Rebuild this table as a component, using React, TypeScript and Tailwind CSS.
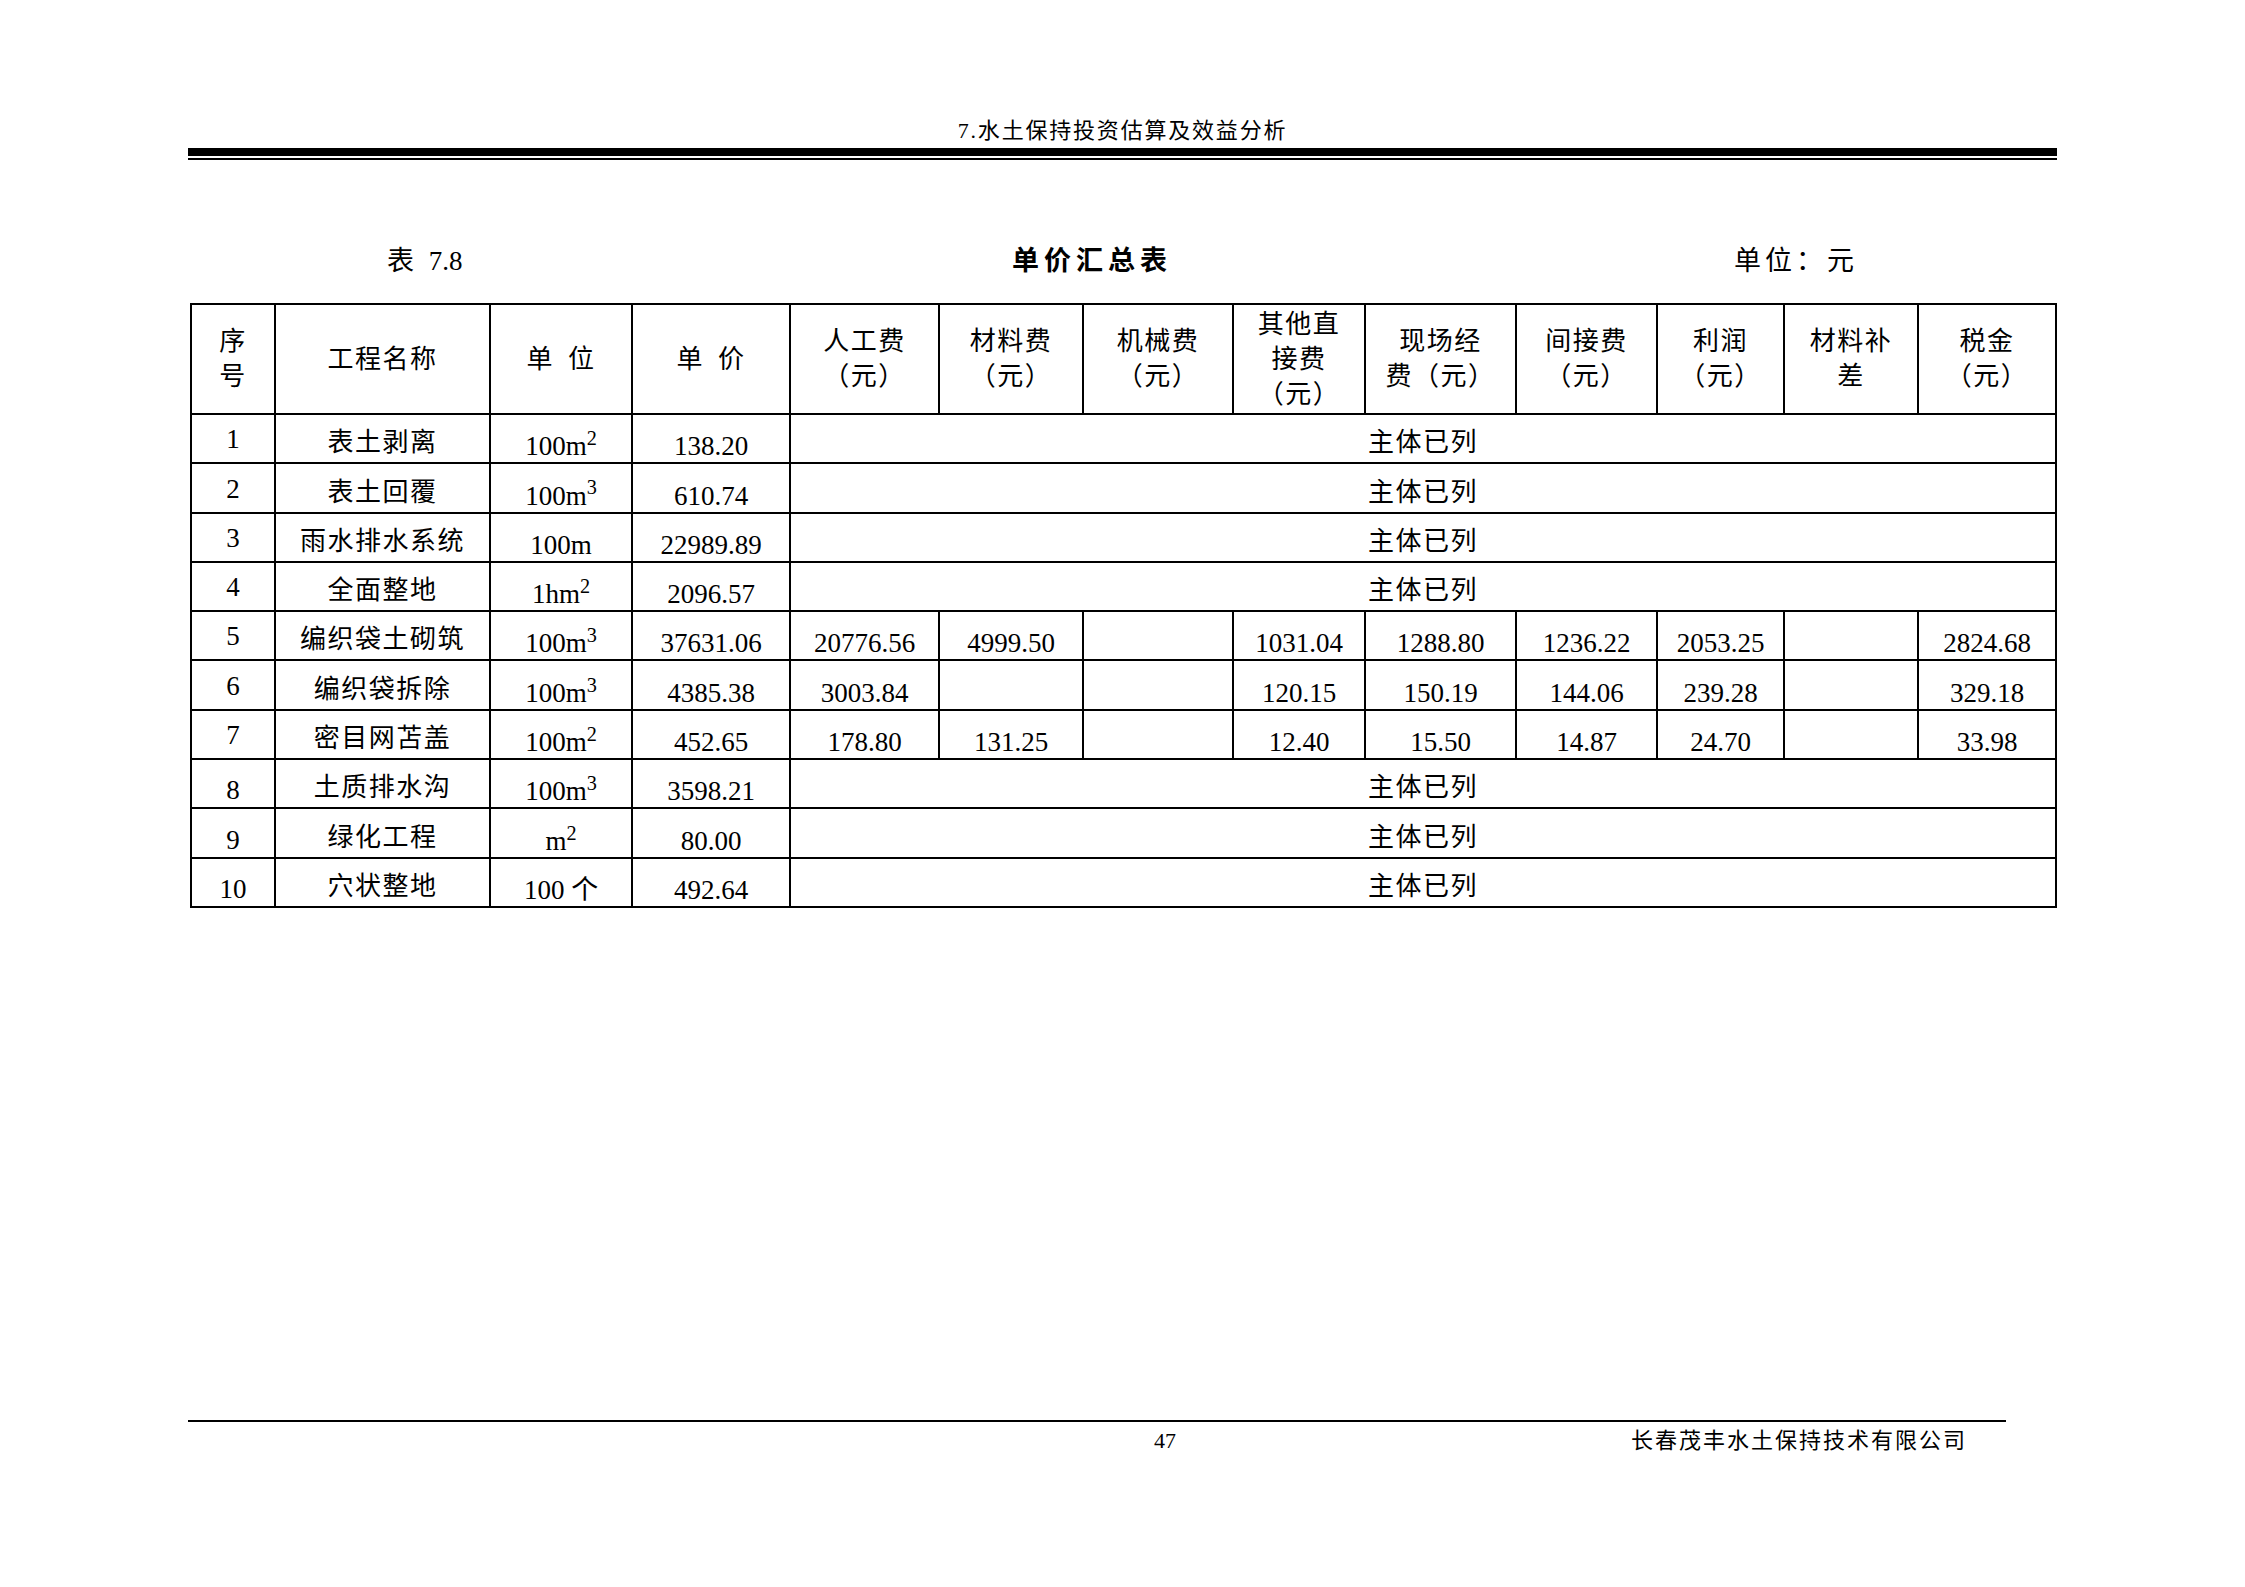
import React from "react";

const serif = "font-['Liberation_Serif','Noto_Sans_CJK_SC',serif]";

type Row = {
  no: string;
  name: string;
  unit: React.ReactNode;
  price: string;
  detail?: string[];
};

const rows: Row[] = [
  { no: "1", name: "表土剥离", unit: <>100m<sup>2</sup></>, price: "138.20" },
  { no: "2", name: "表土回覆", unit: <>100m<sup>3</sup></>, price: "610.74" },
  { no: "3", name: "雨水排水系统", unit: "100m", price: "22989.89" },
  { no: "4", name: "全面整地", unit: <>1hm<sup>2</sup></>, price: "2096.57" },
  {
    no: "5",
    name: "编织袋土砌筑",
    unit: <>100m<sup>3</sup></>,
    price: "37631.06",
    detail: ["20776.56", "4999.50", "", "1031.04", "1288.80", "1236.22", "2053.25", "", "2824.68"],
  },
  {
    no: "6",
    name: "编织袋拆除",
    unit: <>100m<sup>3</sup></>,
    price: "4385.38",
    detail: ["3003.84", "", "", "120.15", "150.19", "144.06", "239.28", "", "329.18"],
  },
  {
    no: "7",
    name: "密目网苫盖",
    unit: <>100m<sup>2</sup></>,
    price: "452.65",
    detail: ["178.80", "131.25", "", "12.40", "15.50", "14.87", "24.70", "", "33.98"],
  },
  { no: "8", name: "土质排水沟", unit: <>100m<sup>3</sup></>, price: "3598.21" },
  { no: "9", name: "绿化工程", unit: <>m<sup>2</sup></>, price: "80.00" },
  { no: "10", name: "穴状整地", unit: "100 个", price: "492.64" },
];

const colWidths = [84, 215, 142, 158, 149, 144, 150, 132, 151, 141, 127, 134, 138];

const th = "border-2 border-black align-middle text-center text-[26px] leading-[35px] tracking-[1.5px] font-normal";
const num = "border-2 border-black align-bottom text-center text-[27px] leading-[31px] p-0";
const cjk = "border-2 border-black align-bottom text-center text-[26px] leading-[31px] tracking-[1.5px] p-0 pb-[4px]";

export default function App() {
  return (
    <div className={`w-[2245px] h-[1587px] bg-white text-black flex flex-col ${serif}`}>
      {/* Running header */}
      <div className="ml-[188px] w-[1869px] pt-[118px]">
        <div className="text-center text-[22px] leading-[26px] tracking-[1.8px]">7.水土保持投资估算及效益分析</div>
        <div className="h-[8px] bg-black mt-[4px]" />
        <div className="h-[2px] bg-black mt-[2px]" />
      </div>

      {/* Table caption */}
      <div className="ml-[188px] mt-[85px] flex text-[27px] leading-[32px]">
        <div className="w-[824px] pl-[199px]">
          <span className="tracking-[4px]">表 </span>7.8
        </div>
        <div className="w-[722px] font-bold tracking-[5px]">单价汇总表</div>
        <div className="tracking-[4px]">单位：元</div>
      </div>

      {/* Table */}
      <table className="ml-[190px] mt-[26px] w-[1865px] table-fixed border-collapse">
        <colgroup>
          {colWidths.map((w, i) => (
            <col key={i} style={{ width: w }} />
          ))}
        </colgroup>
        <thead>
          <tr className="h-[110px]">
            <th className={th}>序<br />号</th>
            <th className={th}>工程名称</th>
            <th className={th}><span className="mr-[14px]">单</span>位</th>
            <th className={th}><span className="mr-[14px]">单</span>价</th>
            <th className={th}>人工费<br />（元）</th>
            <th className={th}>材料费<br />（元）</th>
            <th className={th}>机械费<br />（元）</th>
            <th className={`${th} leading-[33px]`}>其他直<br />接费<br />（元）</th>
            <th className={th}>现场经<br />费（元）</th>
            <th className={th}>间接费<br />（元）</th>
            <th className={th}>利润<br />（元）</th>
            <th className={th}>材料补<br />差</th>
            <th className={th}>税金<br />（元）</th>
          </tr>
        </thead>
        <tbody>
          {rows.map((r, idx) => (
            <tr key={r.no} className="h-[49.3px]">
              <td className={`${num} ${idx < 7 ? "pb-[7px]" : "pb-[1px]"}`}>{r.no}</td>
              <td className={cjk}>{r.name}</td>
              <td className={num}>{r.unit}</td>
              <td className={num}>{r.price}</td>
              {r.detail ? (
                r.detail.map((v, i) => (
                  <td key={i} className={num}>{v}</td>
                ))
              ) : (
                <td colSpan={9} className={cjk}>主体已列</td>
              )}
            </tr>
          ))}
        </tbody>
      </table>

      {/* Footer */}
      <div className="mt-auto ml-[188px] pb-[133px]">
        <div className="w-[1818px] h-[2px] bg-black" />
        <div className="flex mt-[6px] text-[22px] leading-[26px]">
          <div className="w-[1443px] pl-[966px]">47</div>
          <div className="tracking-[2px]">长春茂丰水土保持技术有限公司</div>
        </div>
      </div>
    </div>
  );
}
